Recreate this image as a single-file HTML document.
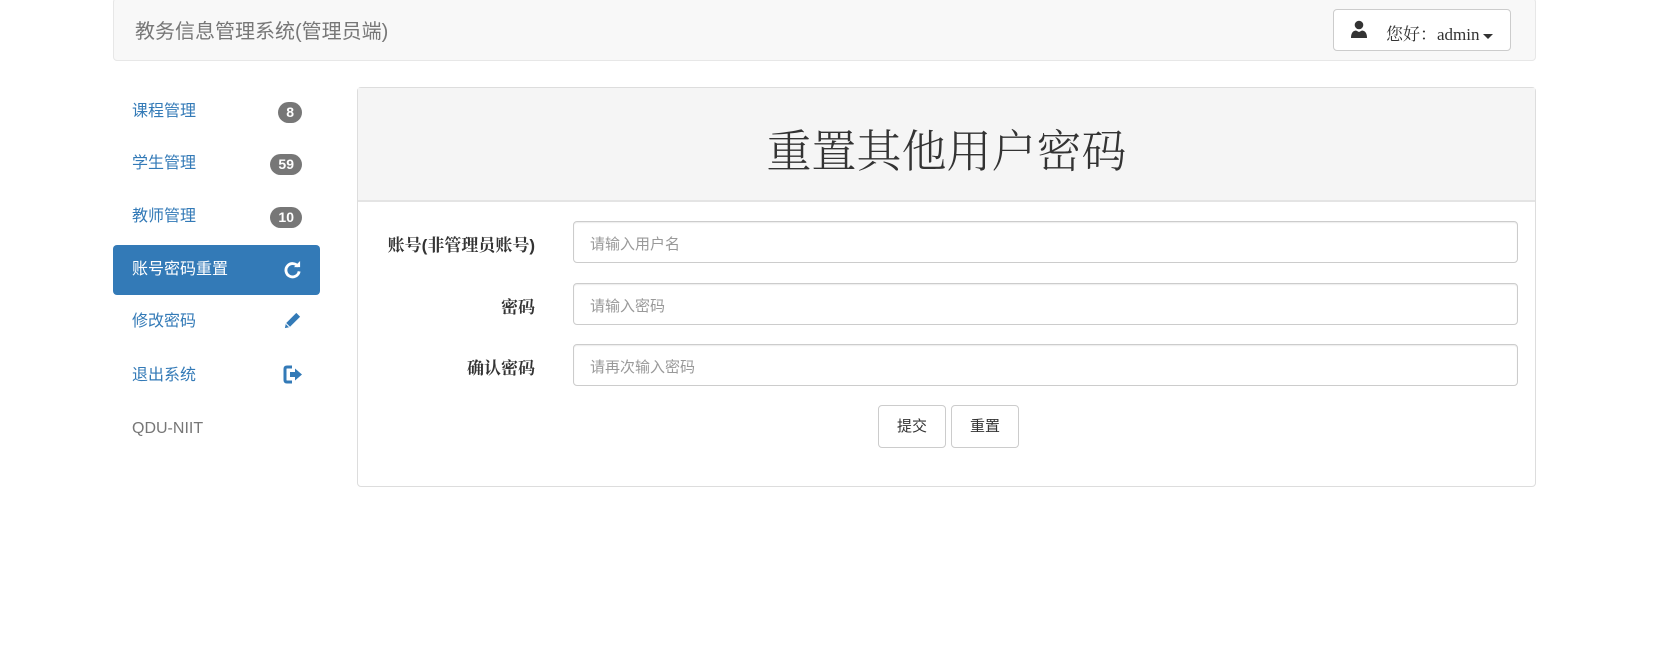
<!DOCTYPE html>
<html><head><meta charset="utf-8"><style>
*{box-sizing:border-box;margin:0;padding:0}
body{width:1676px;height:667px;background:#fff;font-family:"Liberation Sans","Noto Sans CJK SC",sans-serif;position:relative;overflow:hidden;color:#333}
.nav{position:absolute;left:113px;top:-2px;width:1423px;height:63px;background:#f8f8f8;border:1px solid #e7e7e7;border-radius:4px}
.brand{position:absolute;left:21px;top:16px;font-size:20px;color:#777;white-space:nowrap}
.dd{position:absolute;left:1219px;top:10px;width:178px;height:42px;background:#fff;border:1px solid #ccc;border-radius:4px;font-family:"Liberation Serif","Noto Serif CJK SC",serif;font-size:17px;color:#333}
.dd .t{position:absolute;left:52px;top:10px;white-space:nowrap}
.caret{display:inline-block;width:0;height:0;border-left:5px solid transparent;border-right:5px solid transparent;border-top:5px solid #333;vertical-align:middle;margin-left:3px}
.side a{position:absolute;left:113px;width:207px;height:50px;font-size:16px;color:#337ab7;padding-left:19px;line-height:50px;border-radius:4px;text-decoration:none}
.side a.act{background:#337ab7;color:#fff}
.badge{position:absolute;right:18px;top:15px;height:21px;line-height:21px;padding:0 8px;border-radius:11px;background:#777;color:#fff;font-size:14px;font-weight:bold}
.ic{position:absolute;left:170px;top:14px}
.panel{position:absolute;left:357px;top:87px;width:1179px;height:400px;border:1px solid #ddd;border-radius:4px;background:#fff}
.ph{height:114px;background:#f5f5f5;border-bottom:2px solid #e4e4e4;text-align:center;font-family:"Liberation Serif","Noto Serif CJK SC",serif;font-size:45px;line-height:128px;color:#333;font-weight:300}
.lab{position:absolute;right:1000px;font-size:17px;font-weight:bold;white-space:nowrap;font-family:"Liberation Sans","Noto Serif CJK SC",serif}
.inp{position:absolute;left:215px;width:945px;height:42px;border:1px solid #ccc;border-radius:4px;font-size:15px;color:#999;padding:11px 16px;box-shadow:inset 0 1px 1px rgba(0,0,0,.075)}
.btn{position:absolute;top:317px;width:68px;height:43px;border:1px solid #ccc;border-radius:4px;background:#fff;font-size:15px;text-align:center;line-height:41px;color:#333}
</style></head><body>
<div class="nav"><div class="brand">教务信息管理系统(管理员端)</div>
<div class="dd"><svg style="position:absolute;left:16px;top:10px" width="18" height="18" viewBox="0 0 18 18"><circle cx="9" cy="5" r="4.3" fill="#333"/><path d="M1 18 Q1 11 6 10.5 L9 12 L12 10.5 Q17 11 17 18Z" fill="#333"/></svg><span class="t">您好：admin<span class="caret"></span></span></div></div>
<div class="side">
<a style="top:87px">课程管理<span class="badge">8</span></a>
<a style="top:139px">学生管理<span class="badge">59</span></a>
<a style="top:192px">教师管理<span class="badge">10</span></a>
<a class="act" style="top:245px">账号密码重置<svg class="ic" style="top:15px" width="19" height="19" viewBox="0 0 20 20"><path d="M16 7 A7 7 0 1 0 17 12" fill="none" stroke="#fff" stroke-width="3"/><path d="M11.5 7.5 L18 7.5 L18 1Z" fill="#fff"/></svg></a>
<a style="top:297px">修改密码<svg class="ic" width="19" height="19" viewBox="0 0 20 20"><path d="M2 18 L3 13 L14 2 L18 6 L7 17Z" fill="#337ab7"/><path d="M3 13 L7 17" stroke="#fff" stroke-width="1.2"/></svg></a>
<a style="top:351px">退出系统<svg class="ic" width="20" height="19" viewBox="0 0 20 19"><path d="M9 2 H4 Q2 2 2 4 V15 Q2 17 4 17 H9" fill="none" stroke="#337ab7" stroke-width="3"/><path d="M7 7 H12 V3.5 L19 9.5 L12 15.5 V12 H7Z" fill="#337ab7"/></svg></a>
<a style="top:404px;color:#777">QDU-NIIT</a>
</div>
<div class="panel"><div class="ph">重置其他用户密码</div>
<div class="lab" style="top:143px">账号(非管理员账号)</div>
<div class="inp" style="top:133px">请输入用户名</div>
<div class="lab" style="top:205px">密码</div>
<div class="inp" style="top:195px">请输入密码</div>
<div class="lab" style="top:266px">确认密码</div>
<div class="inp" style="top:256px">请再次输入密码</div>
<div class="btn" style="left:520px">提交</div>
<div class="btn" style="left:593px">重置</div>
</div>
</body></html>
